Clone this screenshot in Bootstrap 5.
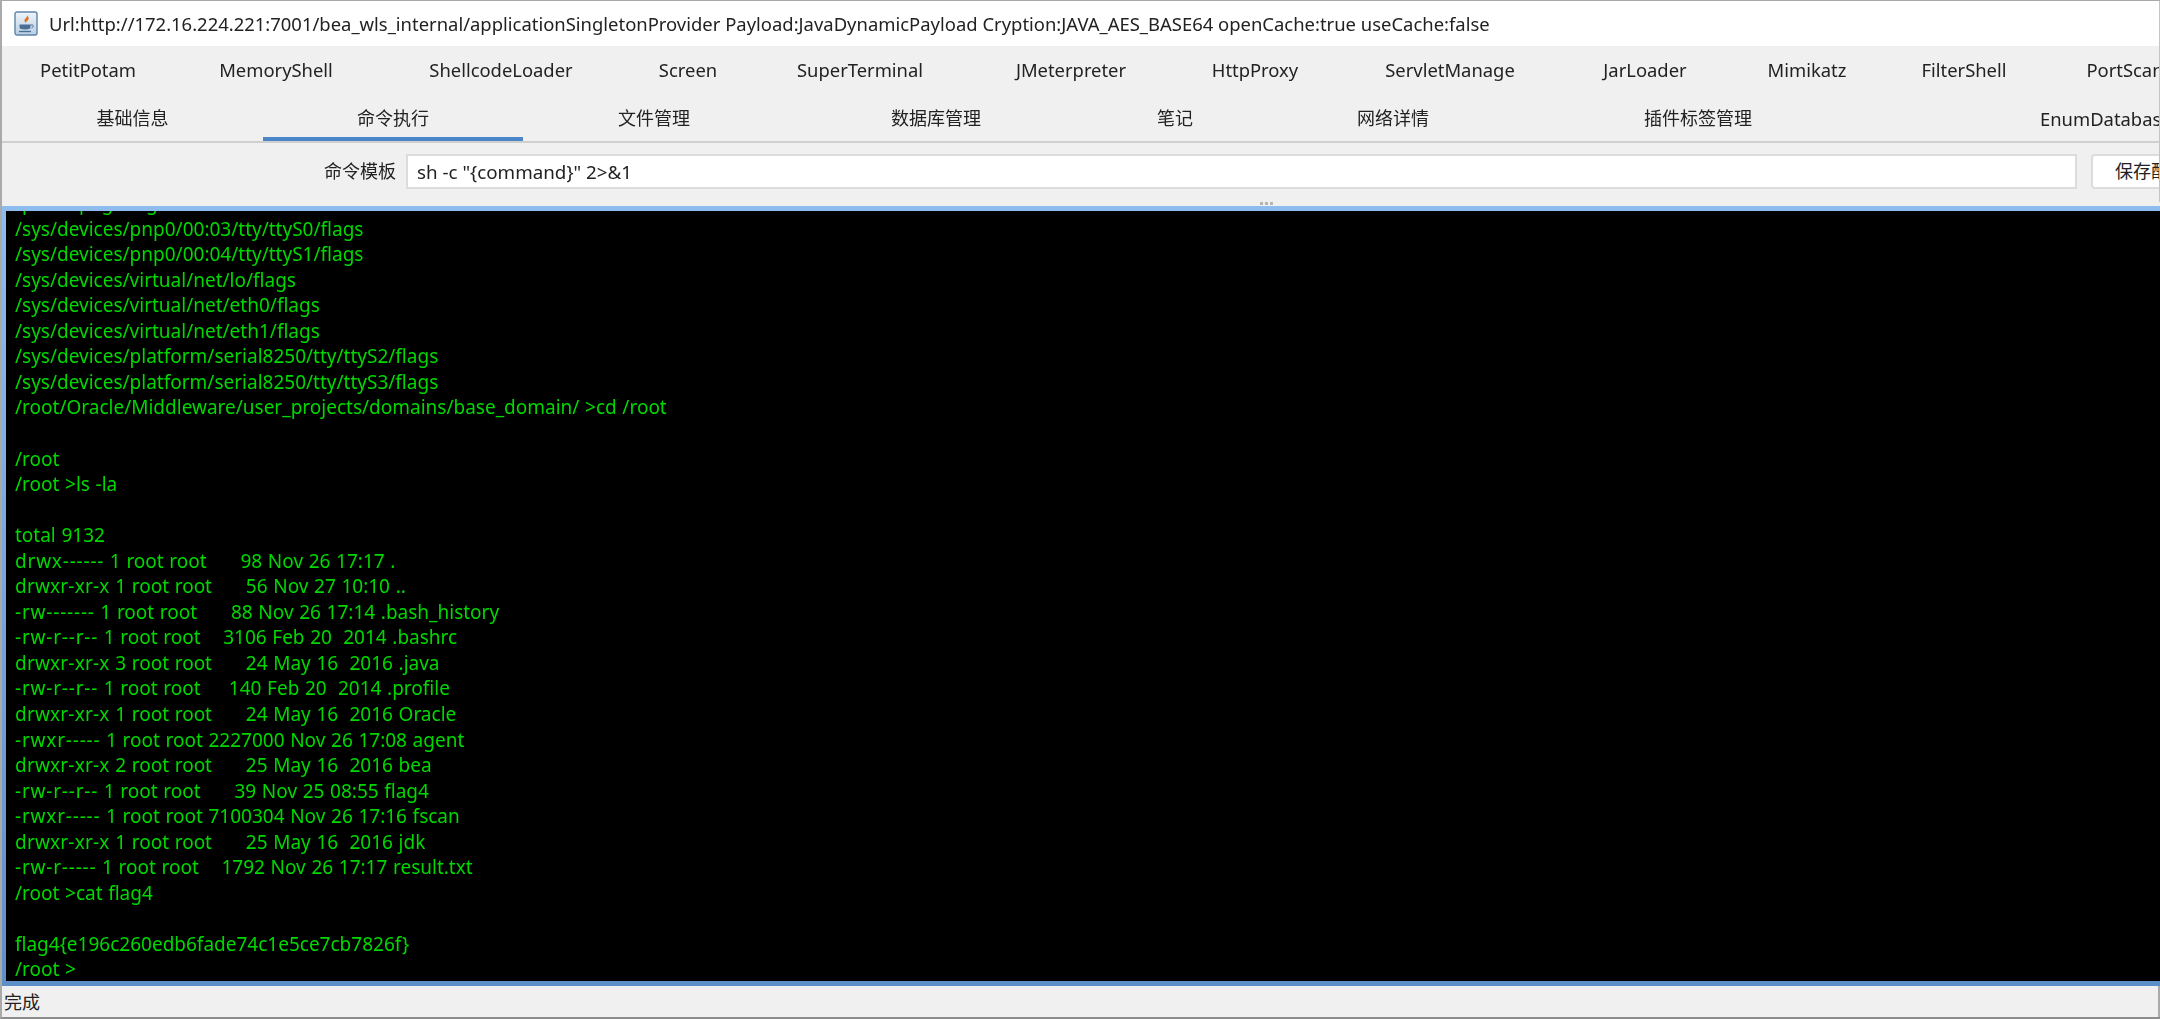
<!doctype html>
<html lang="zh">
<head>
<meta charset="utf-8">
<title>Godzilla</title>
<link href="https://cdn.jsdelivr.net/npm/bootstrap@5.3.0/dist/css/bootstrap.min.css" rel="stylesheet">
<style>
html,body{height:100%;overflow:hidden}
body{background:#f0f0f0;font-family:"Noto Sans","Noto Sans CJK SC",sans-serif;font-size:18px;color:#222}
.shell{height:1019px;border:solid #aaa;border-width:1px 0 2px 2px;border-bottom-color:#8c8c8c;filter:blur(.3px)}
.titlebar{height:45px;background:#fff;padding-left:12px;gap:11px;white-space:nowrap;font-size:18.45px;border-right:1px solid #c4c4c4}
.titlebar svg{flex:none}
.tabstrip{height:47px;flex-wrap:nowrap;overflow:hidden;border-right:1px solid #c4c4c4}
.tabstrip .nav-link{flex:none;padding:0;text-align:center;color:#222;height:100%;line-height:48px;white-space:nowrap;font-size:18.4px}
.tabstrip.second{border-bottom:2px solid #cfcfcf;height:50px}
.tabstrip.second .nav-link{height:50px;line-height:51px;font-size:18px}
.tabstrip.second .nav-link.active{border-bottom:6px solid #4a86c8;background:transparent;color:#222}
.tabstrip.second .nav-link.clip-tail{text-align:left;padding-left:167px;width:400px;font-size:18.4px}
.cmdbar{height:59px;padding:11px 0 0 322px;gap:10px;overflow:hidden;white-space:nowrap;border-right:1px solid #c4c4c4;margin-bottom:-1px}
.cmdbar label{width:72px;margin:0;flex:none;line-height:35px}
.cmdbar input{width:1671px;height:35px;flex:none;border:2px solid #dcdcdc;border-radius:0;padding:0 9px;font-size:18.8px;color:#222;background:#fff;box-shadow:none}
.cmdbar .btn{flex:none;margin-left:4px;width:120px;height:35px;padding:0;background:#fff;border:2px solid #dcdcdc;border-radius:4px;font-size:18px;color:#222}
.dots{height:5px;gap:2px;padding:1px 0 0 1258px}
.dots i{width:3px;height:3px;background:#b5b5b5;display:block}
.term{flex:1 1 0;min-height:0;background:#000;overflow:hidden;border-left:4px solid #7fb0e6;border-top:5px solid;border-bottom:5px solid;border-image:linear-gradient(#8fbcee,#5d8fc9) 5;border-right:0}
.term pre{flex:none;margin:0 0 -2px;padding:0 0 0 9px;font-family:"Noto Sans",sans-serif;font-size:19px;line-height:25.55px;color:#00d800;white-space:pre;overflow:visible;word-spacing:.7px}
.term .pa{letter-spacing:.2px}
.term .pb{letter-spacing:.8px}
.statusbar{height:31px;line-height:32px;padding-left:2px;font-size:18px;background:#f0f0f0;border-right:2px solid #aaa}
</style>
</head>
<body>
<div class="shell d-flex flex-column">
  <div class="titlebar d-flex align-items-center">
    <svg width="24" height="25" viewBox="0 0 24 25" aria-hidden="true">
      <defs><linearGradient id="g1" x1="0" y1="0" x2="0" y2="1"><stop offset="0" stop-color="#eef4fa"/><stop offset="1" stop-color="#b9cfe4"/></linearGradient></defs>
      <rect x="1" y="1" width="22" height="23" rx="2" fill="url(#g1)" stroke="#5f84a8" stroke-width="1.4"/>
      <path d="M13 3.500c1.500 2.500-3 4-2.500 6.500c.3 1.200 1.500 2 1.500 2c-.5-1.500 3.500-3 2.500-5.500c-.4-1-1-2-1.500-3z" fill="#e2711d"/>
      <path d="M5.500 13.500h11v2.500c0 1.800-1.800 2.500-5.500 2.500s-5.500-.7-5.500-2.500z" fill="#4a6f96"/>
      <path d="M16.500 14h2c1.200 0 1.200 2.500-1 3" fill="none" stroke="#4a6f96" stroke-width="1"/>
      <path d="M5 20.500h12" stroke="#4a6f96" stroke-width="1.400"/>
    </svg>
    <span>Url:http://172.16.224.221:7001/bea_wls_internal/applicationSingletonProvider Payload:JavaDynamicPayload Cryption:JAVA_AES_BASE64 openCache:true useCache:false</span>
  </div>
  <nav class="nav tabstrip first">
    <a class="nav-link" style="width:172px">PetitPotam</a>
    <a class="nav-link" style="width:204px">MemoryShell</a>
    <a class="nav-link" style="width:246px">ShellcodeLoader</a>
    <a class="nav-link" style="width:128px">Screen</a>
    <a class="nav-link" style="width:216px">SuperTerminal</a>
    <a class="nav-link" style="width:206px">JMeterpreter</a>
    <a class="nav-link" style="width:162px">HttpProxy</a>
    <a class="nav-link" style="width:228px">ServletManage</a>
    <a class="nav-link" style="width:162px">JarLoader</a>
    <a class="nav-link" style="width:162px">Mimikatz</a>
    <a class="nav-link" style="width:152px">FilterShell</a>
    <a class="nav-link" style="width:170px">PortScan</a>
  </nav>
  <nav class="nav tabstrip second">
    <a class="nav-link" style="width:261px">基础信息</a>
    <a class="nav-link active" style="width:260px">命令执行</a>
    <a class="nav-link" style="width:262px">文件管理</a>
    <a class="nav-link" style="width:302px">数据库管理</a>
    <a class="nav-link" style="width:176px">笔记</a>
    <a class="nav-link" style="width:260px">网络详情</a>
    <a class="nav-link" style="width:350px">插件标签管理</a>
    <a class="nav-link clip-tail">EnumDatabase</a>
  </nav>
  <div class="cmdbar d-flex align-items-start">
    <label>命令模板</label>
    <input class="form-control" type="text" value='sh -c "{command}" 2&gt;&amp;1'>
    <button class="btn" type="button">保存配置</button>
  </div>
  <div class="dots d-flex"><i></i><i></i><i></i></div>
  <div class="term d-flex flex-column justify-content-end">
<pre>/proc/kpageflags
/sys/devices/pnp0/00:03/tty/ttyS0/flags
/sys/devices/pnp0/00:04/tty/ttyS1/flags
/sys/devices/virtual/net/lo/flags
/sys/devices/virtual/net/eth0/flags
/sys/devices/virtual/net/eth1/flags
/sys/devices/platform/serial8250/tty/ttyS2/flags
/sys/devices/platform/serial8250/tty/ttyS3/flags
/root/Oracle/Middleware/user_projects/domains/base_domain/ &gt;cd /root

/root
/root &gt;ls -la

total 9132
<span class="pb">drwx------</span> 1 root root      98 Nov 26 17:17 .
<span class="pa">drwxr-xr-x</span> 1 root root      56 Nov 27 10:10 ..
<span class="pb">-rw-------</span> 1 root root      88 Nov 26 17:14 .bash_history
<span class="pb">-rw-r--r--</span> 1 root root    3106 Feb 20  2014 .bashrc
<span class="pa">drwxr-xr-x</span> 3 root root      24 May 16  2016 .java
<span class="pb">-rw-r--r--</span> 1 root root     140 Feb 20  2014 .profile
<span class="pa">drwxr-xr-x</span> 1 root root      24 May 16  2016 Oracle
<span class="pb">-rwxr-----</span> 1 root root 2227000 Nov 26 17:08 agent
<span class="pa">drwxr-xr-x</span> 2 root root      25 May 16  2016 bea
<span class="pb">-rw-r--r--</span> 1 root root      39 Nov 25 08:55 flag4
<span class="pb">-rwxr-----</span> 1 root root 7100304 Nov 26 17:16 fscan
<span class="pa">drwxr-xr-x</span> 1 root root      25 May 16  2016 jdk
<span class="pb">-rw-r-----</span> 1 root root    1792 Nov 26 17:17 result.txt
/root &gt;cat flag4

flag4{e196c260edb6fade74c1e5ce7cb7826f}
/root &gt;</pre>
  </div>
  <div class="statusbar">完成</div>
</div>
<script src="https://cdn.jsdelivr.net/npm/bootstrap@5.3.0/dist/js/bootstrap.bundle.min.js"></script>
</body>
</html>
